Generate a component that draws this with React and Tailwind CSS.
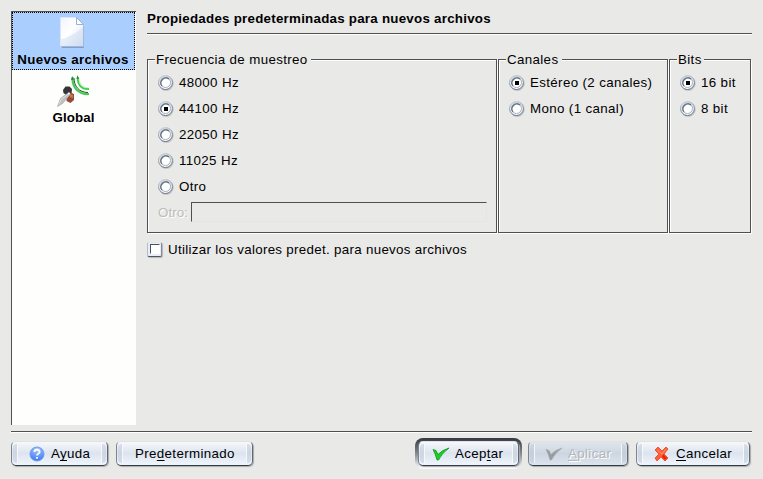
import React from 'react';

function Radio({ checked, label }) {
  return (
    <label className="-ml-px flex h-[26px] items-center">
      <svg width="18" height="18" viewBox="0 0 18 18" className="mr-[4px] shrink-0">
        <defs>
          <linearGradient id="ring" x1="0" y1="0" x2="0" y2="1">
            <stop offset="0" stopColor="#c9d2dc" />
            <stop offset="0.45" stopColor="#dde6f0" />
            <stop offset="1" stopColor="#ffffff" />
          </linearGradient>
          <linearGradient id="edge" x1="0" y1="0" x2="0.3" y2="1">
            <stop offset="0" stopColor="#d3d8dd" />
            <stop offset="0.5" stopColor="#9aa5b1" />
            <stop offset="1" stopColor="#66727f" />
          </linearGradient>
        </defs>
        <circle cx="9.3" cy="9.5" r="7.4" fill="#c3c5c6" />
        <circle cx="8.5" cy="8.5" r="7" fill="url(#ring)" stroke="url(#edge)" />
        <circle cx="8.5" cy="8.5" r="5" fill="#fff" stroke="#a5b0bd" strokeWidth="1" />
        <path d="M5 12A5 5 0 0 1 12 5" fill="none" stroke="#626d7c" strokeWidth="1.2" />
        {checked && <rect x="7" y="7" width="4" height="4" fill="#000" />}
      </svg>
      <span>{label}</span>
    </label>
  );
}

function Group({ title, className, titleClass, children }) {
  return (
    <div className={`relative h-[174px] shrink-0 border border-[#505050] shadow-[1px_1px_0_#fff,inset_1px_1px_0_#fff] ${className}`}>
      <div className={`absolute -top-[9px] left-[7px] h-[17px] bg-[#e9e9e8] pl-px leading-[17px] ${titleClass}`}>{title}</div>
      <div className="pl-[10px] pt-[10px]">{children}</div>
    </div>
  );
}

function Button({ className, icon, disabled, children }) {
  return (
    <button
      className={`relative flex h-[25px] items-center rounded-[5px] border border-t-[#dfe2e6] border-r-[#5d6875] border-b-[#343b44] border-l-[#7b8490] shadow-[1px_1px_1px_#a8aaac] ${
        disabled
          ? 'bg-linear-to-b from-[#dfe5eb] via-[#ccd6e2] to-[#dce4ed] text-[#b4b7bb] [text-shadow:1px_1px_0_#fff]'
          : 'bg-linear-to-b from-[#f6f8fb] via-[#dce4ef] to-[#f0f5fc] text-black'
      } ${className}`}
    >
      <span className="absolute inset-y-[2px] left-[1px] w-[5px] rounded-l-[4px] border-r border-white/80 bg-[#bdc8d5]/50" />
      <span className="absolute inset-y-[2px] right-[1px] w-[5px] rounded-r-[4px] border-l border-white/80 bg-[#bdc8d5]/50" />
      {icon}
      <span className="relative whitespace-nowrap">{children}</span>
    </button>
  );
}

function U({ children }) {
  return <span className="underline decoration-1 underline-offset-2 [text-decoration-skip-ink:none]">{children}</span>;
}

function FileIcon() {
  return (
    <svg width="32" height="32" viewBox="0 0 32 32">
      <defs>
        <linearGradient id="paper" x1="0" y1="0" x2="1" y2="1">
          <stop offset="0" stopColor="#f0f5fc" />
          <stop offset="0.45" stopColor="#ffffff" />
          <stop offset="1" stopColor="#d2def1" />
        </linearGradient>
      </defs>
      <path d="M6 3h15l7 7v22H6z" fill="#6685b4" opacity=".65" />
      <path d="M4.5 1.5h16l7 7v22h-23z" fill="url(#paper)" stroke="#dce6f4" />
      <path d="M5 23Q16 21 27 11V30H5z" fill="#c8d7ef" opacity=".4" />
      <path d="M20.5 1.5v7h7z" fill="#fff" stroke="#7d9dcb" strokeWidth=".8" />
      <path d="M4.5 30.5h23v-21" fill="none" stroke="#94acd0" strokeWidth=".8" />
    </svg>
  );
}

function GlobalIcon() {
  return (
    <svg width="32" height="32" viewBox="0 0 32 32">
      <path d="M15.5 2C15 12 21 19.500 32 19" fill="none" stroke="#49c957" strokeWidth="2.2" />
      <path d="M17 3C17 11 22 17.500 31 17.500" fill="none" stroke="#1f5a2a" strokeWidth="1" />
      <path d="M21 2C20 9 24 14.500 32 14" fill="none" stroke="#3fcf4d" strokeWidth="2" />
      <path d="M22 3C22 9 26 13 31.500 12.800" fill="none" stroke="#a6eeaa" strokeWidth=".8" />
      <path d="M15.500 1l-1.500 4h2.500zM20.500 0l-1 4h2.500z" fill="#258838" />
      <path d="M6 15l2.500-3.500h4L15 14l-.5 5-4 2L6.500 18z" fill="#353536" />
      <path d="M9.500 20l4-2.500 3.500 1.500v6l-3.500 3-4-2z" fill="#974a35" />
      <path d="M13 19l3 1v3l-3-1z" fill="#c37658" />
      <path d="M11.500 17.500L3.500 23.500.5 31.500 5.500 28.500 13 20z" fill="#bfc1c3" stroke="#8c8e90" strokeWidth=".5" />
      <path d="M10.500 19.500L4 24.500l-2 5" fill="none" stroke="#e2e3e4" strokeWidth=".8" />
      <circle cx="12" cy="18.500" r="1.100" fill="#fff" />
    </svg>
  );
}

function HelpIcon() {
  return (
    <svg width="16" height="16" viewBox="0 0 16 16" className="ml-[17px] mr-[6px] shrink-0">
      <defs>
        <radialGradient id="help" cx=".5" cy=".15" r=".9">
          <stop offset="0" stopColor="#a9c8ff" />
          <stop offset="1" stopColor="#3475ee" />
        </radialGradient>
      </defs>
      <circle cx="8" cy="8" r="7" fill="url(#help)" stroke="#6d9af2" />
      <path d="M5.4 6.1C5.4 3 10.6 3 10.6 5.9 10.6 7.6 8 7.7 8 9.6M8 11v1.8" fill="none" stroke="#fff" strokeWidth="1.8" />
    </svg>
  );
}

function Check({ gray, className }) {
  return (
    <svg width="18" height="14" viewBox="0 0 18 14" className={`relative shrink-0 ${className}`}>
      <path
        d="M1 2.500l3 1 2 4Q10 3 17 1 10 6 6.500 13H5Q3.500 7 1 2.500z"
        fill={gray ? '#989ca0' : '#0fd51c'}
        stroke={gray ? '#a6aaae' : '#0b8715'}
        strokeWidth=".7"
      />
    </svg>
  );
}

function Cross() {
  return (
    <svg width="16" height="16" viewBox="0 0 16 16" className="ml-[17px] mr-[6px] shrink-0">
      <path d="M4 1l4 4 4-4 2 2-4 5 4 4-3 3-4-4-4 4-2-3 4-4-4-4z" fill="#ff6038" stroke="#e7401e" strokeWidth=".8" strokeLinejoin="round" />
      <path d="M8 11l3 3 2-2-4-4" fill="#ee2105" />
      <path d="M3.5 4L8 8l4-5" fill="none" stroke="#ff9868" />
    </svg>
  );
}

export default function App() {
  return (
    <div className="flex h-[479px] w-[763px] flex-col bg-[#e9e9e8] pl-[11px] pt-[11px] font-['Liberation_Sans',Arial,sans-serif] text-[13.333px] leading-[16px] tracking-[.31px] whitespace-nowrap text-black">
      <div className="flex h-[414px]">
        <aside className="h-[414px] w-[125px] shrink-0 border-t border-l border-[#505050] bg-[#fefefd]">
          <div className="flex h-[58px] w-[123px] flex-col items-center border border-dotted border-black bg-[#aacfff] pt-[3px]">
            <div className="h-[32px] -translate-x-[2px]"><FileIcon /></div>
            <div className="mt-[4px] -ml-px text-center font-bold">Nuevos archivos</div>
          </div>
          <div className="flex w-[123px] flex-col items-center pt-[5px]">
            <div className="-ml-px"><GlobalIcon /></div>
            <div className="mt-[3px] font-bold tracking-[.1px]">Global</div>
          </div>
        </aside>
        <main className="ml-[11px] w-[605px]">
          <h1 className="h-[22px] font-bold tracking-[.25px]">Propiedades predeterminadas para nuevos archivos</h1>
          <div className="h-[2px] border-t border-b border-t-[#505050] border-b-white" />
          <div className="mt-[24px] flex gap-px tracking-[.36px]">
            <Group title="Frecuencia de muestreo" className="w-[350px]" titleClass="w-[156px]">
              <Radio label="48000 Hz" />
              <Radio label="44100 Hz" checked />
              <Radio label="22050 Hz" />
              <Radio label="11025 Hz" />
              <Radio label="Otro" />
              <div className="mt-[2px] flex items-center text-[#bdbdbc] [text-shadow:1px_1px_0_#fff]">
                <span className="w-[33px] pt-px tracking-[.1px]">Otro:</span>
                <div className="h-[20px] w-[296px] border border-t-[#505050] border-r-[#e5e5e4] border-b-[#e5e5e4] border-l-[#505050]" />
              </div>
            </Group>
            <Group title="Canales" className="w-[170px]" titleClass="w-[56px]">
              <Radio label="Estéreo (2 canales)" checked />
              <Radio label="Mono (1 canal)" />
            </Group>
            <Group title="Bits" className="w-[82px]" titleClass="w-[27px]">
              <Radio label="16 bit" checked />
              <Radio label="8 bit" />
            </Group>
          </div>
          <label className="mt-[8px] flex h-[18px] items-center">
            <span className="-mt-[2px] mr-[6px] flex h-[15px] w-[15px] items-center justify-center rounded-[2px] border border-t-[#e3e7eb] border-r-[#7e8a96] border-b-[#4a5561] border-l-[#b4bcc5] bg-[#e8eef5] shadow-[1px_1px_1px_#b5b7b9]">
              <span className="h-[10px] w-[10px] border border-t-[#4c5158] border-r-white border-b-white border-l-[#4c5158] bg-[#fdfefe]" />
            </span>
            <span>Utilizar los valores predet. para nuevos archivos</span>
          </label>
        </main>
      </div>
      <div className="mt-[6px] h-[2px] w-[741px] border-t border-b border-t-[#505050] border-b-white" />
      <div className="flex pt-[8px] tracking-[.35px]">
        <Button className="w-[97px]" icon={<HelpIcon />}>A<U>y</U>uda</Button>
        <Button className="ml-[8px] w-[137px] pl-[18px]">Pre<U>d</U>eterminado</Button>
        <div className="-mt-[3px] ml-[162px] h-[31px] w-[107px] rounded-[8px] bg-linear-to-b from-[#33393f] via-[#858a90] to-white p-[3px]">
          <Button className="w-[101px]" icon={<Check className="ml-[13px] mr-[5px]" />}>Acep<U>t</U>ar</Button>
        </div>
        <Button className="ml-[6px] w-[100px]" disabled icon={<Check gray className="ml-[16px] mr-[5px]" />}><U>A</U>plicar</Button>
        <Button className="ml-[8px] w-[114px]" icon={<Cross />}><U>C</U>ancelar</Button>
      </div>
    </div>
  );
}
